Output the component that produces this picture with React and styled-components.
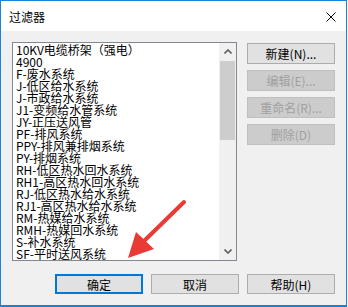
import styled, { createGlobalStyle } from "styled-components";

const Global = createGlobalStyle`
  html, body {
    margin: 0;
    padding: 0;
    background: #ffffff;
  }
  body {
    font-family: "Noto Sans CJK SC", "Liberation Sans", sans-serif;
  }
`;

const items = [
  "10KV电缆桥架（强电）",
  "4900",
  "F-废水系统",
  "J-低区给水系统",
  "J-市政给水系统",
  "J1-变频给水管系统",
  "JY-正压送风管",
  "PF-排风系统",
  "PPY-排风兼排烟系统",
  "PY-排烟系统",
  "RH-低区热水回水系统",
  "RH1-高区热水回水系统",
  "RJ-低区热水给水系统",
  "RJ1-高区热水给水系统",
  "RM-热媒给水系统",
  "RMH-热媒回水系统",
  "S-补水系统",
  "SF-平时送风系统",
];

const sideButtons = [
  { label: "新建(N)...", disabled: false },
  { label: "编辑(E)...", disabled: true },
  { label: "重命名(R)...", disabled: true },
  { label: "删除(D)", disabled: true },
];

export default function App() {
  return (
    <>
      <Global />
      <Window>
        <TitleBar>
          <span>过滤器</span>
          <Close>
            <svg width="10" height="10" viewBox="0 0 10 10">
              <path d="M0.5 0.5 L9.5 9.5 M9.5 0.5 L0.5 9.5" stroke="#000" strokeWidth="1" />
            </svg>
          </Close>
        </TitleBar>
        <Body>
          <TopRow>
            <ListBox>
              <ListItems>
                {items.map((it) => (
                  <Item key={it}>{it}</Item>
                ))}
              </ListItems>
              <ScrollBar>
                <ArrowBtn>
                  <svg width="8" height="5" viewBox="0 0 8 5">
                    <path d="M0.5 4.5 L4 1 L7.5 4.5" fill="none" stroke="#606060" strokeWidth="1.6" />
                  </svg>
                </ArrowBtn>
                <Track>
                  <Thumb />
                </Track>
                <ArrowBtn>
                  <svg width="8" height="5" viewBox="0 0 8 5">
                    <path d="M0.5 0.5 L4 4 L7.5 0.5" fill="none" stroke="#606060" strokeWidth="1.6" />
                  </svg>
                </ArrowBtn>
              </ScrollBar>
            </ListBox>
            <SideColumn>
              {sideButtons.map((b) => (
                <Button key={b.label} $disabled={b.disabled} $h={21}>
                  {b.label}
                </Button>
              ))}
            </SideColumn>
          </TopRow>
          <BottomRow>
            <Button $primary $h={20}>确定</Button>
            <Button $h={20}>取消</Button>
            <Button $h={20}>帮助(H)</Button>
          </BottomRow>
        </Body>
        <Annotation width="347" height="307" viewBox="0 0 347 307">
          <line x1="184" y1="202" x2="142" y2="243" stroke="#ea3a35" strokeWidth="4" strokeLinecap="round" />
          <polygon points="128,258 136,232 154,249" fill="#ea3a35" />
        </Annotation>
      </Window>
    </>
  );
}

const Window = styled.div`
  position: relative;
  width: 347px;
  height: 307px;
  box-sizing: border-box;
  border: 1px solid #1883d7;
  border-bottom-width: 2px;
  display: flex;
  flex-direction: column;
  background: #f0f0f0;
  overflow: hidden;
`;

const TitleBar = styled.div`
  height: 30px;
  flex: none;
  background: #ffffff;
  display: flex;
  align-items: center;
  justify-content: space-between;
  padding: 0 10px 0 8px;
  font-size: 12px;
  color: #000;
`;

const Close = styled.div`
  display: flex;
  align-items: center;
  margin-top: 1px;
`;

const Body = styled.div`
  flex: 1;
  padding: 11px 0 0 11px;
  display: flex;
  flex-direction: column;
`;

const TopRow = styled.div`
  display: flex;
  gap: 10px;
`;

const ListBox = styled.div`
  width: 225px;
  height: 219px;
  box-sizing: border-box;
  border: 1px solid #828790;
  background: #ffffff;
  display: flex;
`;

const ListItems = styled.div`
  flex: 1;
  padding: 1px 0 0 3px;
  overflow: hidden;
`;

const Item = styled.div`
  height: 12px;
  line-height: 12px;
  font-size: 12px;
  color: #000;
  white-space: nowrap;
`;

const ScrollBar = styled.div`
  width: 17px;
  background: #f0f0f0;
  display: flex;
  flex-direction: column;
`;

const ArrowBtn = styled.div`
  height: 17px;
  display: flex;
  align-items: center;
  justify-content: center;
`;

const Track = styled.div`
  flex: 1;
  padding: 1px 1px 0 1px;
`;

const Thumb = styled.div`
  height: 79px;
  background: #cdcdcd;
`;

const SideColumn = styled.div`
  display: flex;
  flex-direction: column;
  gap: 6px;
  padding-top: 1px;
`;

const Button = styled.div`
  width: 88px;
  height: ${(p) => p.$h}px;
  box-sizing: border-box;
  display: flex;
  align-items: center;
  justify-content: center;
  font-size: 12px;
  background: ${(p) => (p.$disabled ? "#cccccc" : "#e1e1e1")};
  color: ${(p) => (p.$disabled ? "#a0a0a0" : "#000")};
  border: ${(p) =>
    p.$primary ? "2px solid #0078d7" : p.$disabled ? "1px solid #bfbfbf" : "1px solid #adadad"};
`;

const BottomRow = styled.div`
  display: flex;
  gap: 8px;
  margin-top: 13px;
  padding-left: 43px;
`;

const Annotation = styled.svg`
  position: absolute;
  left: -1px;
  top: -1px;
  pointer-events: none;
`;
